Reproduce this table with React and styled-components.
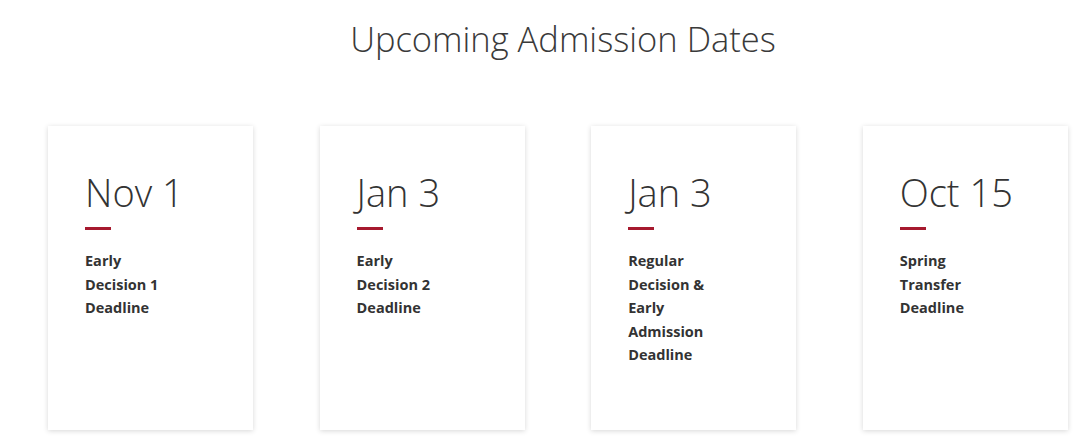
import React from "react";
import styled, { createGlobalStyle } from "styled-components";

const Global = createGlobalStyle`
  html, body { margin: 0; padding: 0; background: #ffffff; }
  body { font-family: "Open Sans", "Liberation Sans", sans-serif; color: #333; }
`;

const Page = styled.div`
  width: 1080px;
  height: 445px;
  overflow: hidden;
  background: #fff;
`;

const Title = styled.h1`
  margin: 0;
  height: 56px;
  box-sizing: border-box;
  padding-top: 22px;
  padding-left: 46px;
  text-align: center;
  font-family: "Open Sans", sans-serif;
  font-weight: 300;
  font-size: 34.5px;
  line-height: 1;
  color: #3a3a3a;
`;

const Cards = styled.div`
  display: flex;
  gap: 66.6px;
  padding-left: 48px;
  margin-top: 70px;
`;

const Card = styled.div`
  width: 205px;
  height: 304px;
  flex-shrink: 0;
  box-sizing: border-box;
  background: #fff;
  box-shadow: 0 1px 5px rgba(0, 0, 0, 0.16);
  padding: 47px 0 0 37px;
`;

const DateText = styled.div`
  font-weight: 300;
  font-size: 38px;
  line-height: 1;
  color: #333;
`;

const Bar = styled.div`
  width: 26px;
  height: 3px;
  background: #a6192e;
  margin-top: 16px;
`;

const Label = styled.div`
  margin-top: 19px;
  width: 92px;
  font-weight: 700;
  font-size: 14.5px;
  line-height: 23.5px;
  color: #333;
`;

const items = [
  { date: "Nov 1", label: "Early Decision 1 Deadline" },
  { date: "Jan 3", label: "Early Decision 2 Deadline" },
  { date: "Jan 3", label: "Regular Decision & Early Admission Deadline" },
  { date: "Oct 15", label: "Spring Transfer Deadline" },
];

export default function App() {
  return (
    <Page>
      <Global />
      <Title>Upcoming Admission Dates</Title>
      <Cards>
        {items.map((it, i) => (
          <Card key={i}>
            <DateText>{it.date}</DateText>
            <Bar />
            <Label>{it.label}</Label>
          </Card>
        ))}
      </Cards>
    </Page>
  );
}
